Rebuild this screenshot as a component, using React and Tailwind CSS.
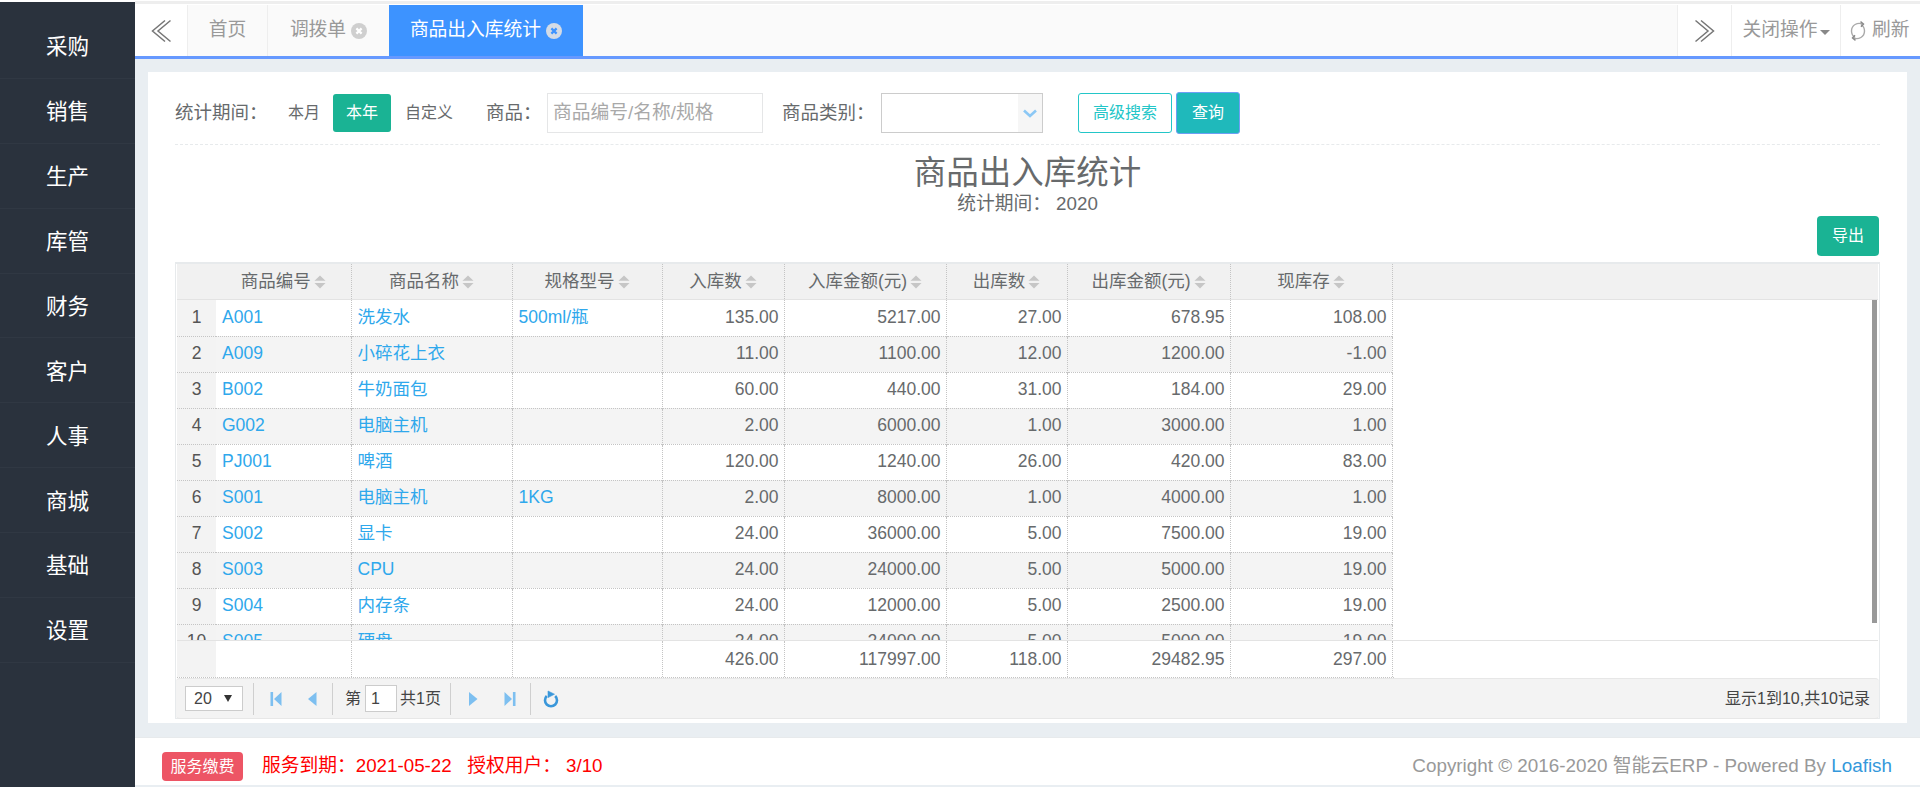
const rows = [
  ["A001","洗发水","500ml/瓶","135.00","5217.00","27.00","678.95","108.00"],
  ["A009","小碎花上衣","","11.00","1100.00","12.00","1200.00","-1.00"],
  ["B002","牛奶面包","","60.00","440.00","31.00","184.00","29.00"],
  ["G002","电脑主机","","2.00","6000.00","1.00","3000.00","1.00"],
  ["PJ001","啤酒","","120.00","1240.00","26.00","420.00","83.00"],
  ["S001","电脑主机","1KG","2.00","8000.00","1.00","4000.00","1.00"],
  ["S002","显卡","","24.00","36000.00","5.00","7500.00","19.00"],
  ["S003","CPU","","24.00","24000.00","5.00","5000.00","19.00"],
  ["S004","内存条","","24.00","12000.00","5.00","2500.00","19.00"],
  ["S005","硬盘","","24.00","24000.00","5.00","5000.00","19.00"],
];
const menu = ["采购","销售","生产","库管","财务","客户","人事","商城","基础","设置"];
const heads = ["商品编号","商品名称","规格型号","入库数","入库金额(元)","出库数","出库金额(元)","现库存"];
const widths = [39,135,161,150,122,162,121,163,162];

function Cols() {
  return <colgroup>{widths.map((w,i)=><col key={i} style={{width:w}} />)}</colgroup>;
}
function Sort() {
  return <svg width="12" height="14" viewBox="0 0 12 14" className="ml-[3px] shrink-0"><path d="M6 0.5 L11.5 5.8 H0.5 Z M0.5 8 H11.5 L6 13.5 Z" fill="#c6c6c6"/></svg>;
}
function Chevrons({dir}) {
  return <svg width="20" height="24" viewBox="0 0 20 24" fill="none" stroke="#777" strokeWidth="1.5">
    {dir==="l" ? <path d="M14 1.5 L1.5 12 L14 22.5 M19.5 1.5 L7 12 L19.5 22.5"/> : <path d="M0.5 1.5 L13 12 L0.5 22.5 M6 1.5 L18.5 12 L6 22.5"/>}
  </svg>;
}
function CloseDot({bg,fg}) {
  return <svg width="16" height="16" viewBox="0 0 16 16" className="ml-[5px]"><circle cx="8" cy="8" r="8" fill={bg}/><path d="M5.4 5.4 L10.6 10.6 M10.6 5.4 L5.4 10.6" stroke={fg} strokeWidth="2.2"/></svg>;
}
function Pager({d}) {
  const m = {
    first:<path d="M0.5 0h2.6v14H0.5z M11.5 0v14L4 7z"/>,
    prev:<path d="M9.5 0v14L1 7z"/>,
    next:<path d="M1 0v14L9.5 7z"/>,
    last:<path d="M0.5 0v14L8 7z M8.9 0h2.6v14H8.9z"/>,
  };
  return <svg width="12" height="14" viewBox="0 0 12 14" fill="#7dbff0">{m[d]}</svg>;
}
const Sep = () => <div className="w-px h-[32px] bg-[#cfcfcf]" />;

export default function App() {
  return (
    <div className="w-[1920px] h-[787px] overflow-hidden flex bg-white text-[#676a6c]" style={{fontFamily:'"Liberation Sans","Noto Sans CJK SC",sans-serif'}}>
      <aside className="w-[135px] shrink-0 mt-[2px] bg-[#2a323d] pt-[12px]">
        {menu.map(m=>(
          <div key={m} className="h-[64.9px] flex items-center justify-center pt-[3px] text-white text-[21.5px] border-b border-[#303843]">{m}</div>
        ))}
      </aside>
      <main className="flex-1 min-w-0 flex flex-col bg-[#e9eef2]">
        <div className="h-[5px] bg-white">
          <div className="h-[3px] bg-[#eeeeee] mt-px" />
        </div>
        <div className="h-[54px] flex border-b-[3px] border-[#6699ff] bg-[#fafafa] text-[18.75px] text-[#999]">
          <div className="w-[53px] bg-white border-r border-[#eeeeee] flex items-center justify-center"><Chevrons dir="l"/></div>
          <div className="w-[80px] border-r border-[#eeeeee] flex items-center justify-center">首页</div>
          <div className="w-[121px] flex items-center justify-center">调拨单<CloseDot bg="#cfcfcf" fg="#fff"/></div>
          <div className="w-[194px] bg-[#3d93ff] text-white flex items-center justify-center">商品出入库统计<CloseDot bg="#d3dbe6" fg="#3d93ff"/></div>
          <div className="flex-1" />
          <div className="w-[54px] bg-white border-l border-[#eeeeee] flex items-center justify-center"><Chevrons dir="r"/></div>
          <div className="w-[109px] bg-white border-l border-[#eeeeee] flex items-center justify-center">关闭操作<span className="ml-[2px] mt-[3px] border-x-[5px] border-x-transparent border-t-[5px] border-t-[#888]" /></div>
          <div className="w-[80px] bg-white border-l border-[#eeeeee] flex items-center pl-[8px]">
            <svg width="18" height="22" viewBox="0 0 18 22" fill="none" stroke="#aaa" strokeWidth="1.4" className="mr-[5px]"><path d="M13.5 4 C8.5 2 2.5 5 2.5 11 C2.5 14 4 16.2 6 17.5"/><path d="M4.5 18 C9.5 20 15.5 17 15.5 11 C15.5 8 14 5.8 12 4.5"/><path d="M11.5 1.6 L14.5 4 L12 6.8 M6.5 20.4 L3.5 18 L6 15.2" stroke="#888"/></svg>
            刷新
          </div>
        </div>
        <div className="h-[13px] shrink-0" />
        <div className="h-[651px] shrink-0 ml-[13px] mr-[13px] bg-white px-[27px] pt-[22px]">
          <div className="h-[51px] flex items-start border-b border-dashed border-[#e7eaec] text-[18.5px]">
            <span className="h-[38px] flex items-center w-[113px] whitespace-nowrap">统计期间：</span>
            <span className="h-[38px] flex items-center w-[45px] text-[16px]">本月</span>
            <span className="w-[58px] h-[38px] rounded-[3px] bg-[#1ab394] text-white text-[16px] flex items-center justify-center">本年</span>
            <span className="h-[38px] flex items-center pl-[14px] w-[95px] text-[16px]">自定义</span>
            <span className="h-[38px] flex items-center w-[61px] whitespace-nowrap">商品：</span>
            <div className="w-[216px] h-[40px] -mt-px border border-[#e5e6e7] flex items-center pl-[5px] text-[18.75px] text-[#a9a9a9]">商品编号/名称/规格</div>
            <span className="h-[38px] flex items-center ml-[19px] w-[99px] whitespace-nowrap">商品类别：</span>
            <div className="w-[162px] h-[40px] -mt-px border-[1.5px] border-[#cccccc] flex justify-end">
              <div className="w-[24px] h-full bg-[#f6f6f6] flex items-center justify-center">
                <svg width="14" height="9" viewBox="0 0 14 9" fill="none" stroke="#8cc8f5" strokeWidth="2.6"><path d="M1 1.5 L7 7 L13 1.5"/></svg>
              </div>
            </div>
            <div className="ml-[35px] w-[94px] h-[40px] -mt-px border border-[#23c6c8] rounded-[3px] text-[#23c6c8] text-[16px] flex items-center justify-center">高级搜索</div>
            <div className="ml-[4px] w-[64px] h-[42px] -mt-[2px] border border-[#6d9ff5] rounded-[3px] bg-[#1fb9bb] text-white text-[16px] flex items-center justify-center">查询</div>
          </div>
          <div className="h-[71px] flex flex-col items-center">
            <div className="text-[32.5px] leading-[36px] mt-[10px]">商品出入库统计</div>
            <div className="text-[18.75px] leading-[22px] mt-[2px] whitespace-pre">统计期间： 2020</div>
          </div>
          <div className="flex justify-end pr-[1px]">
            <div className="w-[62px] h-[40px] bg-[#1ab394] rounded-[4px] text-white text-[16px] flex items-center justify-center">导出</div>
          </div>
          <div className="mt-[6px] h-[457px] border border-[#e7eaec] border-t-2 px-px text-[17.5px]">
            <div className="h-[36px] bg-[#f1f1f1] border-b border-[#e3e3e3]">
              <table className="table-fixed border-collapse h-full"><Cols/>
                <tbody><tr>
                  <td />
                  {heads.map((h,j)=>(
                    <td key={h} className={(j ? "border-l " : "") + "border-dotted border-[#c4c4c4] last:border-r"}>
                      <div className="flex items-center justify-center">{h}<Sort/></div>
                    </td>
                  ))}
                </tr></tbody>
              </table>
            </div>
            <div className="h-[341px] overflow-hidden relative border-b border-[#e3e3e3]">
              <table className="table-fixed border-collapse"><Cols/>
                <tbody>
                  {rows.map((r,i)=>(
                    <tr key={i} className={(i%2 ? "bg-[#f4f4f4] " : "") + "h-[36px] border-b border-dotted border-[#c4c4c4]"}>
                      <td className="bg-[#f3f3f3] text-center text-[#555] pb-px">{i+1}</td>
                      {r.map((c,j)=>(
                        <td key={j} className={(j<3 ? "text-[#2fa8ec] pl-[6px] " : "text-right pr-[5px] ") + (j ? "border-l " : "") + "pb-px border-dotted border-[#c4c4c4] last:border-r"}>{c}</td>
                      ))}
                    </tr>
                  ))}
                </tbody>
              </table>
              <div className="absolute top-0 right-[1px] w-[5px] h-[323px] bg-[#999]" />
            </div>
            <div className="h-[37px] border-b border-dotted border-[#c4c4c4] w-[1217px]">
              <table className="table-fixed border-collapse h-full"><Cols/>
                <tbody><tr>
                  <td className="bg-[#f3f3f3]" />
                  {["","","","426.00","117997.00","118.00","29482.95","297.00"].map((c,j)=>(
                    <td key={j} className={(j ? "border-l " : "") + "text-right pr-[5px] border-dotted border-[#c4c4c4] last:border-r"}>{c}</td>
                  ))}
                </tr></tbody>
              </table>
            </div>
            <div className="h-[41px] -mx-px bg-[#f3f3f3] border-y border-[#e7e7e7] rounded-[4px] flex items-center pl-[9px] pr-[9px] text-[16px] text-[#444]">
              <div className="w-[58px] h-[25px] border border-[#ccc] bg-white flex items-center justify-between pl-[8px] pr-[10px]">20<span className="border-x-[4px] border-x-transparent border-t-[7px] border-t-[#333]" /></div>
              <div className="ml-[10px]"><Sep/></div>
              <div className="ml-[16px]"><Pager d="first"/></div>
              <div className="ml-[25px]"><Pager d="prev"/></div>
              <div className="ml-[13px]"><Sep/></div>
              <span className="ml-[12px]">第</span>
              <div className="ml-[4px] w-[32px] h-[27px] border border-[#ccc] bg-white pl-[5px] flex items-center">1</div>
              <span className="ml-[3px]">共1页</span>
              <div className="ml-[9px]"><Sep/></div>
              <div className="ml-[17px]"><Pager d="next"/></div>
              <div className="ml-[24px]"><Pager d="last"/></div>
              <div className="ml-[14px]"><Sep/></div>
              <svg width="16" height="18" viewBox="0 0 16 18" fill="none" stroke="#3a97da" strokeWidth="2.6" className="ml-[12px]"><path d="M3.8 6 A6 6 0 1 0 12.2 6"/><path d="M5 1 L11.5 4.2 L5 7.6 Z" fill="#3a97da" strokeWidth="0.6"/></svg>
              <span className="ml-auto">显示1到10,共10记录</span>
            </div>
          </div>
        </div>
        <div className="h-[14px] shrink-0" />
        <footer className="h-[48px] shrink-0 bg-white border-t border-[#e7eaec] flex items-center pt-[10px] pl-[27px] pr-[28px] text-[18.75px]">
          <span className="w-[81px] h-[29px] rounded-[4px] bg-[#ed5565] text-white text-[16px] flex items-center justify-center">服务缴费</span>
          <span className="ml-[19px] text-[#ff0000] whitespace-pre">服务到期：2021-05-22   授权用户：<span className="ml-[5px]">3/10</span></span>
          <span className="ml-auto text-[#999] whitespace-nowrap text-[18.85px]">Copyright © 2016-2020 智能云ERP - Powered By <span className="text-[#3498db]">Loafish</span></span>
        </footer>
      </main>
    </div>
  );
}
